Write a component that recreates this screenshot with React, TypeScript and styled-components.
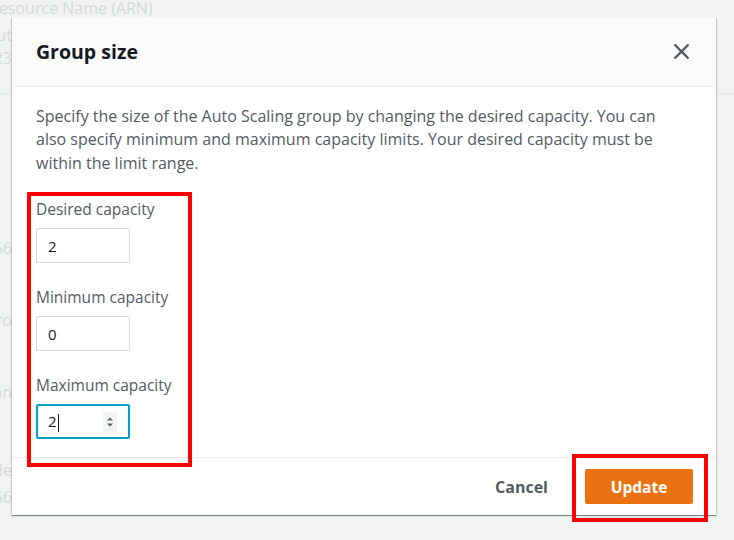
import React from 'react';
import styled, { createGlobalStyle } from 'styled-components';

const GlobalStyle = createGlobalStyle`
  html, body {
    margin: 0;
    padding: 0;
    background: #f2f3f3;
  }
  body {
    font-family: "Open Sans", "Noto Sans", Arial, sans-serif;
  }
`;

const Screen = styled.div`
  position: relative;
  width: 734px;
  height: 540px;
  overflow: hidden;
  background: #f2f3f3;
`;

// faded page behind the modal
const BgPage = styled.div`
  display: flex;
  flex-direction: column;
  color: #d5dbdb;
  font-size: 16px;
`;

const BgHeading = styled.div`
  height: 18px;
  line-height: 16px;
  margin-left: -11px;
  white-space: nowrap;
`;

// narrow cell, text runs off to the left so only its last letters peek out
const BgRow = styled.div<{ $top: number }>`
  margin-top: ${p => p.$top}px;
  width: 12px;
  height: 20px;
  line-height: 20px;
  display: flex;
  justify-content: flex-end;
  white-space: nowrap;
`;

const BgLine = styled.div`
  margin-top: 25px;
  height: 1px;
  background: #e4e8e8;
`;

const Modal = styled.div`
  position: absolute;
  left: 12px;
  top: 18px;
  width: 704px;
  height: 497px;
  background: #fff;
  display: flex;
  flex-direction: column;
  box-shadow: 0 1px 1px 0 rgba(0, 28, 36, 0.3), 1px 1px 1px 0 rgba(0, 28, 36, 0.15),
    -1px 1px 1px 0 rgba(0, 28, 36, 0.15);
`;

const Header = styled.div`
  height: 70px;
  box-sizing: border-box;
  background: #fafafa;
  border-bottom: 1px solid #eaeded;
  display: flex;
  align-items: center;
  justify-content: space-between;
  padding: 0 24px 0 24px;
`;

const Title = styled.h2`
  margin: 0;
  font-size: 19.5px;
  font-weight: 700;
  color: #16191f;
`;

const CloseButton = styled.button`
  border: 0;
  background: none;
  padding: 0;
  width: 22px;
  height: 22px;
  display: flex;
  align-items: center;
  justify-content: center;
  cursor: pointer;
`;

const Body = styled.div`
  flex: 1;
  padding: 18px 24px 18px 24px;
  border-bottom: 1px solid #eaeded;
`;

const Description = styled.p`
  margin: 0;
  max-width: 636px;
  font-size: 16px;
  line-height: 23.5px;
  color: #545b64;
`;

const Fields = styled.div`
  margin-top: 23px;
  display: flex;
  flex-direction: column;
  gap: 23px;
`;

const Field = styled.div`
  display: flex;
  flex-direction: column;
  gap: 8px;
`;

const Label = styled.label`
  font-size: 15.5px;
  line-height: 22px;
  color: #545b64;
`;

const InputBox = styled.div<{ $focused?: boolean }>`
  width: 94px;
  height: 35px;
  box-sizing: border-box;
  border: ${p => (p.$focused ? '2px solid #00a1c9' : '1px solid #d5dbdb')};
  border-radius: 2px;
  padding: 0 ${p => (p.$focused ? 10 : 11)}px;
  display: flex;
  align-items: center;
  justify-content: space-between;
  font-size: 15px;
  color: #16191f;
  background: #fff;
`;

const Caret = styled.span`
  display: inline-block;
  width: 1px;
  height: 18px;
  background: #16191f;
  margin-left: 1px;
  vertical-align: middle;
`;

const Spinner = styled.div`
  width: 14px;
  height: 20px;
  margin-right: 1px;
  background: #f2f3f3;
  display: flex;
  align-items: center;
  justify-content: center;
`;

const Footer = styled.div`
  height: 58px;
  display: flex;
  align-items: center;
  justify-content: flex-end;
  gap: 37px;
  padding-right: 23px;
`;

const LinkButton = styled.button`
  border: 0;
  background: none;
  font-family: inherit;
  font-size: 16px;
  font-weight: 700;
  color: #545b64;
  padding: 0;
  cursor: pointer;
`;

const PrimaryButton = styled.button`
  width: 108px;
  height: 35px;
  border: 0;
  border-radius: 2px;
  background: #ec7211;
  color: #fff;
  font-family: inherit;
  font-size: 15.5px;
  font-weight: 700;
  cursor: pointer;
`;

// red annotation frames drawn over the screenshot
const Annotation = styled.div<{ $x: number; $y: number; $w: number; $h: number }>`
  position: absolute;
  left: ${p => p.$x}px;
  top: ${p => p.$y}px;
  width: ${p => p.$w}px;
  height: ${p => p.$h}px;
  box-sizing: border-box;
  border: 4px solid #ff0000;
  pointer-events: none;
`;

const fields = [
  { label: 'Desired capacity', value: '2' },
  { label: 'Minimum capacity', value: '0' },
  { label: 'Maximum capacity', value: '2', focused: true },
];

export default function App() {
  return (
    <Screen>
      <GlobalStyle />
      <BgPage>
        <BgHeading>Resource Name (ARN)</BgHeading>
        <BgRow $top={7}>Aut</BgRow>
        <BgRow $top={3}>123</BgRow>
        <BgLine />
        <BgRow $top={144}>56</BgRow>
        <BgRow $top={52}>Pro</BgRow>
        <BgRow $top={52}>Plan</BgRow>
        <BgRow $top={58}>Ne</BgRow>
        <BgRow $top={7}>56</BgRow>
      </BgPage>

      <Modal>
        <Header>
          <Title>Group size</Title>
          <CloseButton aria-label="Close">
            <svg width="17" height="17" viewBox="0 0 16 16">
              <path d="M2 2 L14 14 M14 2 L2 14" stroke="#545b64" strokeWidth="2" strokeLinecap="round" />
            </svg>
          </CloseButton>
        </Header>
        <Body>
          <Description>
            Specify the size of the Auto Scaling group by changing the desired capacity. You can
            also specify minimum and maximum capacity limits. Your desired capacity must be
            within the limit range.
          </Description>
          <Fields>
            {fields.map(f => (
              <Field key={f.label}>
                <Label>{f.label}</Label>
                <InputBox $focused={f.focused}>
                  <span>
                    {f.value}
                    {f.focused && <Caret />}
                  </span>
                  {f.focused && (
                    <Spinner>
                      <svg width="8" height="14" viewBox="0 0 8 14">
                        <path d="M1 5.5 L4 2.5 L7 5.5 Z M1 8.5 L4 11.5 L7 8.5 Z" fill="#545b64" />
                      </svg>
                    </Spinner>
                  )}
                </InputBox>
              </Field>
            ))}
          </Fields>
        </Body>
        <Footer>
          <LinkButton>Cancel</LinkButton>
          <PrimaryButton>Update</PrimaryButton>
        </Footer>
      </Modal>

      <Annotation $x={27} $y={192} $w={165} $h={275} />
      <Annotation $x={572} $y={454} $w={136} $h={68} />
    </Screen>
  );
}
